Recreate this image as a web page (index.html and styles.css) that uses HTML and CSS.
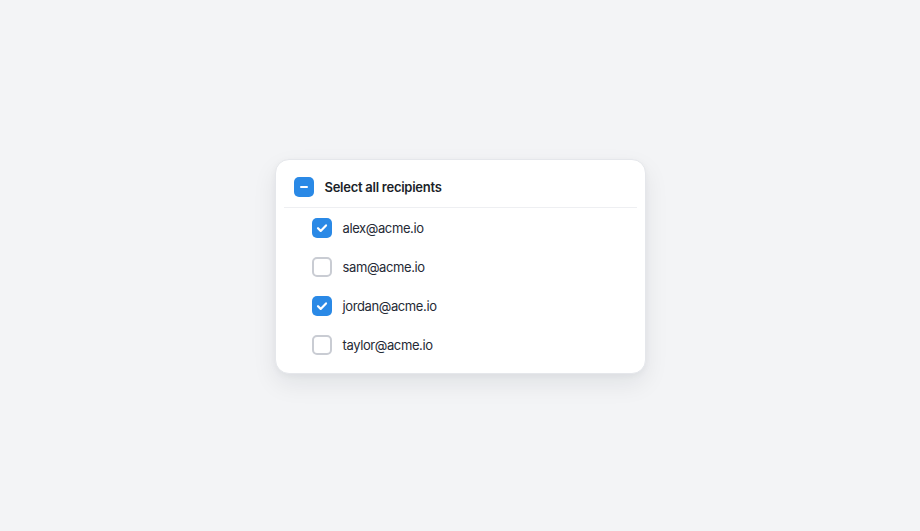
FILE: index.html
```html
<!DOCTYPE html>
<html>
<head>
  <meta charset="utf-8">
  <title>Recipients</title>
  <link rel="stylesheet" href="styles.css">
</head>
<body>
  <div class="card">
    <label class="row row-all">
      <span class="box checked">
        <svg viewBox="0 0 20 20" width="20" height="20"><path d="M7 10h6" stroke="#fff" stroke-width="2" stroke-linecap="round"/></svg>
      </span>
      <span class="label-all">Select all recipients</span>
    </label>

    <div class="list">
      <label class="row row-item">
        <span class="box checked">
          <svg viewBox="0 0 20 20" width="20" height="20"><path d="M6 10.2l2.7 2.7L14 7.4" fill="none" stroke="#fff" stroke-width="2.2" stroke-linecap="round" stroke-linejoin="round"/></svg>
        </span>
        <span class="label">alex@acme.io</span>
      </label>
      <label class="row row-item">
        <span class="box"></span>
        <span class="label">sam@acme.io</span>
      </label>
      <label class="row row-item">
        <span class="box checked">
          <svg viewBox="0 0 20 20" width="20" height="20"><path d="M6 10.2l2.7 2.7L14 7.4" fill="none" stroke="#fff" stroke-width="2.2" stroke-linecap="round" stroke-linejoin="round"/></svg>
        </span>
        <span class="label">jordan@acme.io</span>
      </label>
      <label class="row row-item">
        <span class="box"></span>
        <span class="label">taylor@acme.io</span>
      </label>
    </div>
  </div>
</body>
</html>
```

FILE: styles.css
```css
* {
  margin: 0;
  padding: 0;
  box-sizing: border-box;
}

body {
  background: #f3f4f6;
  font-family: Inter, "Noto Sans", sans-serif;
  width: 920px;
  height: 531px;
  display: flex;
  justify-content: center;
  padding-top: 159px;
}

.card {
  width: 371px;
  height: 215px;
  background: #fff;
  border: 1px solid #e5e7eb;
  border-radius: 14px;
  padding: 7px 8px;
  box-shadow: 0 10px 24px rgba(17, 24, 39, 0.08), 0 2px 6px rgba(17, 24, 39, 0.04);
  align-self: flex-start;
}

.row {
  display: flex;
  align-items: center;
  gap: 11px;
}

.row-all {
  height: 41px;
  padding-left: 10px;
  border-bottom: 1px solid #eeeff2;
}

.row-item {
  height: 39px;
  padding-left: 28px;
}

.box {
  width: 20px;
  height: 20px;
  border-radius: 5px;
  border: 2px solid #c9ccd3;
  background: #fff;
  display: flex;
  align-items: center;
  justify-content: center;
  flex-shrink: 0;
}

.box.checked {
  background: #2a89e6;
  border: none;
}

.label-all {
  font-size: 13px;
  font-weight: 600;
  letter-spacing: -0.02em;
  color: #1b1f29;
}

.label {
  font-size: 13px;
  letter-spacing: -0.03em;
  color: #252a35;
}
```
